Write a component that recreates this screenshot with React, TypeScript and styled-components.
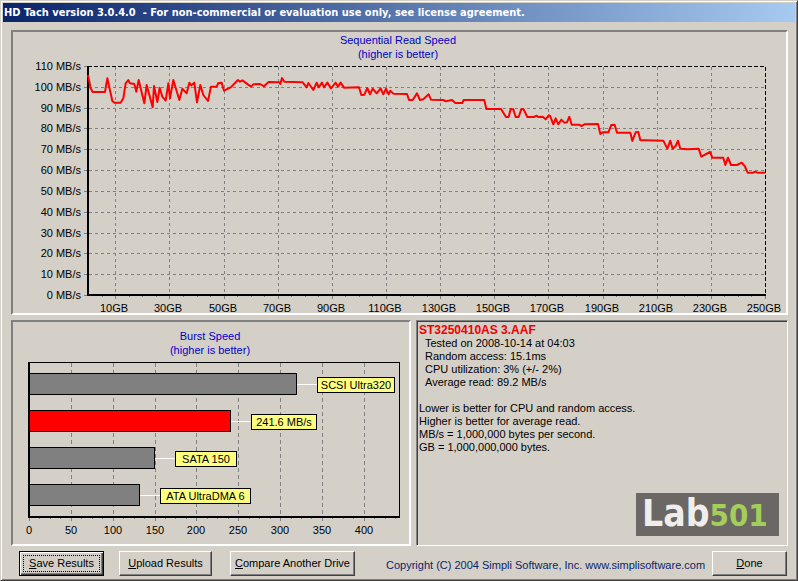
import React from "react";
import styled, { createGlobalStyle } from "styled-components";

const FACE = "#d4d0c8";
const SANS = '"Liberation Sans", Arial, sans-serif';

const GlobalStyle = createGlobalStyle`
  *, *::before, *::after { box-sizing: border-box; }
  body { margin: 0; background: ${FACE}; color: #000; font: 11px/13px ${SANS}; }
`;

const Window = styled.main`
  display: flex;
  flex-direction: column;
  min-height: 100vh;
  background: ${FACE};
  border: 1px solid;
  border-color: ${FACE} #404040 #404040 ${FACE};
  box-shadow: inset 1px 1px #fff, inset -1px -1px #808080;
  padding: 2px;
`;

const TitleBar = styled.header`
  display: flex;
  align-items: center;
  height: 19px;
  padding: 0 1px;
  background: linear-gradient(90deg, #0a246a, #a6caf0);
`;

const WindowTitle = styled.h1`
  margin: 0;
  font: bold 11px/13px "DejaVu Sans Condensed", Tahoma, sans-serif;
  color: #fff;
  white-space: pre;
`;

const Content = styled.div`
  display: grid;
  gap: 5px;
  padding: 8px 7px 0 8px;
`;

const LowerRow = styled.div`
  display: grid;
  grid-template-columns: 400fr 372fr;
  gap: 5px;
`;

const ChartPanel = styled.section`
  border: 2px solid;
  border-color: #808080 #fff #fff #808080;
`;

const Chart = styled.svg`
  display: block;
  width: 100%;
  height: auto;
  font: 11px ${SANS};
`;

const ResultPanel = styled.section`
  display: flex;
  flex-direction: column;
  justify-content: space-between;
  border: 1px solid;
  border-color: #808080 #fff #fff #808080;
  box-shadow: inset 1px 1px #404040;
  padding: 3px 8px 9px 2px;
`;

const DriveName = styled.h2`
  margin: 0;
  font: bold 12px/13px ${SANS};
  color: #f00000;
`;

const Details = styled.div<{ $indent?: boolean }>`
  padding-left: ${(p) => (p.$indent ? "6px" : "0")};
  margin-bottom: ${(p) => (p.$indent ? "13px" : "0")};
`;

const Line = styled.p`
  margin: 0;
  line-height: 13px;
`;

const Logo = styled.svg`
  display: block;
  align-self: flex-end;
  font-family: "DejaVu Sans Condensed", "DejaVu Sans", sans-serif;
  font-weight: bold;
`;

const Footer = styled.footer`
  display: flex;
  align-items: center;
  padding: 5px 8px 1px 16px;
`;

const PushButton = styled.button<{ $width: number; $gap?: number; $isDefault?: boolean }>`
  width: ${(p) => p.$width}px;
  height: 25px;
  margin: 0 ${(p) => p.$gap ?? 0}px 0 0;
  padding: 0 0 1px;
  font: 11px/13px ${SANS};
  color: #000;
  white-space: nowrap;
  background: ${FACE};
  border: 1px solid;
  border-color: ${(p) => (p.$isDefault ? "#000" : "#fff #404040 #404040 #fff")};
  box-shadow: ${(p) =>
    p.$isDefault
      ? "inset 1px 1px #fff, inset -1px -1px #404040, inset -2px -2px #808080"
      : "inset -1px -1px #808080"};
  outline: ${(p) => (p.$isDefault ? "1px dotted #000" : "none")};
  outline-offset: -5px;
`;

const Copyright = styled.p`
  flex: 1;
  margin: 0;
  padding-top: 3px;
  color: #0a246a;
`;

/* Curve samples, in thirds of a chart unit from each run's origin. */
const runs = [
  {
    x: 80, y: 60,
    points: "24,45 32,85 38,96 75,96 82,55 97,123 103,128 122,128 130,115 137,70 145,60 150,70 163,72 169,95 176,60 193,130 200,75 218,142 222,78 232,126 239,83 247,110 257,122 265,70 270,115 280,60 298,120 307,86 320,100 328,68 334,76 343,68 351,127 361,75 370,105 384,123 393,80 410,80 415,69 425,68 432,92 452,82 474,60 480,65 487,61 513,80 520,73 540,72 552,79 566,66 598,67 601,72 606,54 613,65 668,67 680,82 685,69",
  },
  {
    x: 310, y: 60,
    points: "10,90 20,68 26,82 36,68 42,82 52,68 63,85 77,68 84,80 92,68 102,83 147,82 154,105 163,104 172,84 180,103 188,86 200,100 212,85 220,103 228,86 236,103 241,92 250,101 291,102 297,120 308,120 321,100 330,120 340,118 356,103 363,119 400,120 408,124 426,120 436,129 457,129 461,120 523,120 529,147 573,147 588,171 596,171 602,147 610,148 617,171 626,171 634,147 641,148 652,171 672,171 680,167 685,171 698,170 707,178 716,166",
  },
  {
    x: 550, y: 90,
    points: "0,77 10,103 17,85 25,103 34,89 43,98 51,97 58,80 65,104 87,104 95,108 103,103 144,102 151,132 158,127 175,127 184,105 194,104 201,128 241,128 247,153 257,127 265,126 271,151 286,151 340,152 352,176 361,152 368,176 377,168 384,152 391,176 413,178 446,176 454,200 480,186 487,203 520,203 526,225 534,203 543,225 561,225 575,218 584,228 593,248 610,248 615,245 622,248 646,248",
  },
];

const curve = runs
  .flatMap((run) =>
    run.points.split(" ").map((pair) => {
      const [x, y] = pair.split(",").map(Number);
      return `${run.x + x / 3},${run.y + y / 3}`;
    }),
  )
  .join(" ");

const range = (n: number) => Array.from({ length: n }, (_, i) => i);

function ReadSpeedChart() {
  const yAt = (speed: number) => Math.round(295 - (speed * 229) / 110);
  const xAt = (gb: number) => Math.round(765 - (250 - gb) * 2.707);
  return (
    <Chart viewBox="13 32 773 281" role="img" aria-label="Sequential Read Speed">
      <g fill="#0000c8" textAnchor="middle">
        <text x="398" y="44">Sequential Read Speed</text>
        <text x="398" y="58">(higher is better)</text>
      </g>
      <g stroke="#808080" shapeRendering="crispEdges">
        {range(10).map((i) => {
          const y = yAt((i + 1) * 10) + 0.5;
          return <line key={i} x1="89" x2="765" y1={y} y2={y} strokeDasharray="3 3" />;
        })}
        {range(12).map((i) => {
          const x = xAt(i * 20 + 10) + 0.5;
          return <line key={i} x1={x} x2={x} y1="67" y2="294" strokeDasharray="3 3" />;
        })}
        {range(12).map((i) => {
          const y = yAt(i * 10) + 0.5;
          return <line key={i} x1="84" x2="88" y1={y} y2={y} />;
        })}
        {range(50).map((i) => {
          const x = xAt(i * 5 + 5) + 0.5;
          return <line key={i} x1={x} x2={x} y1="296" y2={i % 4 === 1 ? 299 : 297} />;
        })}
      </g>
      <path d="M88 66.5H765.5V294" fill="none" stroke="#000" strokeDasharray="4 2" shapeRendering="crispEdges" />
      <path d="M88 66V295H766" fill="none" stroke="#000" strokeWidth="2" shapeRendering="crispEdges" />
      <polyline points={curve} fill="none" stroke="#f00" strokeWidth="2" strokeLinejoin="round" />
      <g textAnchor="end">
        {range(12).map((i) => (
          <text key={i} x="81" y={yAt(i * 10) + 4}>{i * 10} MB/s</text>
        ))}
      </g>
      <g textAnchor="middle">
        {range(13).map((i) => (
          <text key={i} x={xAt(i * 20 + 10) - 1} y="312">{i * 20 + 10}GB</text>
        ))}
      </g>
    </Chart>
  );
}

const bursts = [
  { label: "SCSI Ultra320", end: 297, top: 373, labelX: 317, labelWidth: 78, fill: "#808080" },
  { label: "241.6 MB/s", end: 231, top: 410, labelX: 251, labelWidth: 66, fill: "#f00" },
  { label: "SATA 150", end: 155, top: 447, labelX: 175, labelWidth: 62, fill: "#808080" },
  { label: "ATA UltraDMA 6", end: 140, top: 484, labelX: 160, labelWidth: 91, fill: "#808080" },
];

function BurstChart() {
  const xAt = (speed: number) => Math.round(29 + speed * 0.837);
  return (
    <Chart viewBox="13 322 396 222" role="img" aria-label="Burst Speed">
      <g fill="#0000c8" textAnchor="middle">
        <text x="210" y="340">Burst Speed</text>
        <text x="210" y="354">(higher is better)</text>
      </g>
      <g stroke="#808080" shapeRendering="crispEdges">
        {range(8).map((i) => {
          const x = xAt(i * 50 + 50) + 0.5;
          return <line key={i} x1={x} x2={x} y1="363" y2="516" strokeDasharray="4 3" />;
        })}
        {range(36).map((i) => {
          const x = xAt(i * 12.5) + 0.5;
          return <line key={i} x1={x} x2={x} y1="518" y2={i % 4 === 0 ? 521 : 519} />;
        })}
      </g>
      <path d="M29 362.5H399.5V516" fill="none" stroke="#000" shapeRendering="crispEdges" />
      {bursts.map((b) => (
        <g key={b.label} shapeRendering="crispEdges">
          <rect x="29.5" y={b.top + 0.5} width={b.end - 30} height="21" fill={b.fill} stroke="#000" />
          <line x1={b.end} x2={b.labelX} y1={b.top + 11.5} y2={b.top + 11.5} stroke="#fff" />
          <rect x={b.labelX + 0.5} y={b.top + 4.5} width={b.labelWidth - 1} height="15" fill="#ffff80" stroke="#000" />
          <text x={b.labelX + b.labelWidth / 2} y={b.top + 16} textAnchor="middle">{b.label}</text>
        </g>
      ))}
      <path d="M29 362V517H400" fill="none" stroke="#000" strokeWidth="2" shapeRendering="crispEdges" />
      <g textAnchor="middle">
        {range(9).map((i) => (
          <text key={i} x={xAt(i * 50)} y="534">{i * 50}</text>
        ))}
      </g>
    </Chart>
  );
}

export default function App() {
  return (
    <>
      <GlobalStyle />
      <Window>
        <TitleBar>
          <WindowTitle>{"HD Tach version 3.0.4.0  - For non-commercial or evaluation use only, see license agreement."}</WindowTitle>
        </TitleBar>
        <Content>
          <ChartPanel>
            <ReadSpeedChart />
          </ChartPanel>
          <LowerRow>
            <ChartPanel>
              <BurstChart />
            </ChartPanel>
            <ResultPanel>
              <div>
                <DriveName>ST3250410AS 3.AAF</DriveName>
                <Details $indent>
                  <Line>Tested on 2008-10-14 at 04:03</Line>
                  <Line>Random access: 15.1ms</Line>
                  <Line>CPU utilization: 3% (+/- 2%)</Line>
                  <Line>Average read: 89.2 MB/s</Line>
                </Details>
                <Details>
                  <Line>Lower is better for CPU and random access.</Line>
                  <Line>Higher is better for average read.</Line>
                  <Line>MB/s = 1,000,000 bytes per second.</Line>
                  <Line>GB = 1,000,000,000 bytes.</Line>
                </Details>
              </div>
              <Logo width="143" height="43" viewBox="0 0 143 43" role="img" aria-label="Lab501">
                <rect width="143" height="43" fill="#6b6764" />
                <text x="6" y="33" fontSize="37" fill="#efeeec">
                  Lab<tspan fontSize="31" fill="#a5cd5b">501</tspan>
                </text>
              </Logo>
            </ResultPanel>
          </LowerRow>
        </Content>
        <Footer>
          <PushButton type="button" $width={85} $gap={15} $isDefault><u>S</u>ave Results</PushButton>
          <PushButton type="button" $width={93} $gap={18}><u>U</u>pload Results</PushButton>
          <PushButton type="button" $width={125} $gap={31}><u>C</u>ompare Another Drive</PushButton>
          <Copyright>Copyright (C) 2004 Simpli Software, Inc. www.simplisoftware.com</Copyright>
          <PushButton type="button" $width={75}><u>D</u>one</PushButton>
        </Footer>
      </Window>
    </>
  );
}
